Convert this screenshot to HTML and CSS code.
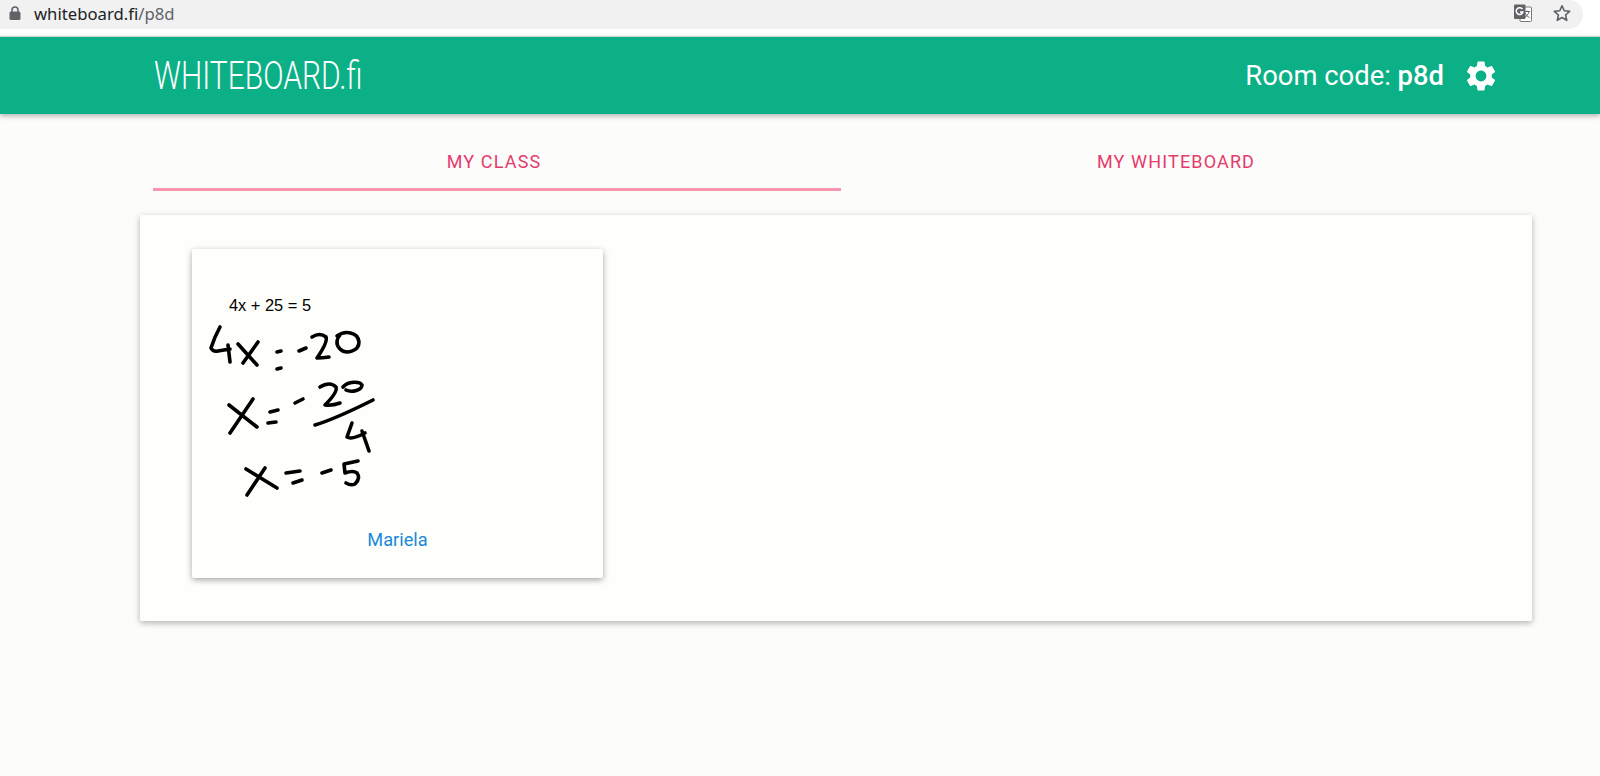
FILE: index.html
```html
<!DOCTYPE html>
<html lang="en">
<head>
    <meta charset="UTF-8">
    <title>Whiteboard.fi</title>
    <link rel="stylesheet" href="styles.css">
</head>
<body>
    <div class="address-row">
        <div class="address-bar">
            <svg class="lock-icon" viewBox="0 0 12 14" width="12" height="14">
                <path d="M3 6V4a3 3 0 0 1 6 0v2" fill="none" stroke="#5f6368" stroke-width="1.6"/>
                <rect x="0.5" y="5.5" width="11" height="8.5" rx="1.5" fill="#5f6368"/>
            </svg>
            <span class="url">whiteboard.fi<span class="url-path">/p8d</span></span>
            <svg class="translate-icon" viewBox="0 0 18 18" width="18" height="18">
                <rect x="6" y="3" width="11.5" height="14.5" rx="1" fill="#fff" stroke="#777" stroke-width="1"/>
                <path d="M10 7.5h6M13 6.5v1M15 7.5c-.6 3-2.6 5-4.6 6M11 9c.8 2 2.6 3.6 4.6 4.5" fill="none" stroke="#666" stroke-width="1"/>
                <rect x="0" y="0.5" width="11.5" height="14.5" rx="1" fill="#5f6368"/>
                <path d="M8.5 5.2a3.4 3.4 0 1 0 .4 2.8H6" fill="none" stroke="#fff" stroke-width="1.5"/>
            </svg>
            <svg class="star-icon" viewBox="0 0 24 24" width="20" height="20">
                <path d="M12 3.3l2.7 6 6.5.7-4.900 4.400 1.400 6.400L12 17.500l-5.700 3.300 1.400-6.400L2.800 10l6.500-.7z" fill="none" stroke="#5f6368" stroke-width="2" stroke-linejoin="round"/>
            </svg>
        </div>
    </div>

    <header class="navbar">
        <div class="logo">WHITEBOARD.fi</div>
        <div class="room-info">
            <span>Room code: <b>p8d</b></span>
            <svg class="gear-icon" viewBox="0 0 24 24" width="36" height="36">
                <path fill="#fff" d="M19.140 12.940c.04-.3.060-.61.060-.94 0-.32-.02-.64-.07-.94l2.030-1.580a.49.49 0 0 0 .12-.61l-1.920-3.320a.49.49 0 0 0-.59-.22l-2.390.96c-.5-.38-1.030-.7-1.620-.94l-.36-2.540a.48.48 0 0 0-.48-.41h-3.840a.47.47 0 0 0-.47.41l-.36 2.540c-.59.24-1.130.57-1.620.94l-2.390-.96a.48.48 0 0 0-.59.22L2.740 8.870a.47.47 0 0 0 .12.61l2.030 1.580c-.05.3-.09.63-.09.94s.02.640.07.94l-2.030 1.580a.49.49 0 0 0-.12.61l1.920 3.320c.12.22.37.29.59.22l2.390-.96c.5.380 1.030.7 1.620.94l.36 2.540c.05.24.24.41.48.41h3.840c.24 0 .44-.17.47-.41l.36-2.540c.59-.24 1.130-.56 1.620-.94l2.390.96c.22.080.47 0 .59-.22l1.920-3.320a.47.47 0 0 0-.12-.61l-2.010-1.580zM12 15.600A3.610 3.610 0 0 1 8.400 12c0-1.980 1.620-3.600 3.600-3.600s3.600 1.620 3.600 3.600-1.620 3.600-3.600 3.600z"/>
            </svg>
        </div>
    </header>

    <nav class="tabs">
        <a class="tab tab-active">MY CLASS</a>
        <a class="tab">MY WHITEBOARD</a>
    </nav>

    <main class="panel">
        <div class="board-card">
            <div class="board-question">4x + 25 = 5</div>
            <!-- the student's pen strokes, in page-ish coordinates -->
            <svg class="board-drawing" viewBox="192 312 411 202" width="411" height="202">
                <g fill="none" stroke="#000" stroke-width="3.6" stroke-linecap="round" stroke-linejoin="round">
                    <path d="M220 327Q214 338 211 348Q213 352 218 351L230 349M228 345L230 362"/>
                    <path d="M238 344L257 365M258 342L243 363"/>
                    <path d="M277 352L281 351M277 369L281 368"/>
                    <path d="M299 351L306 348"/>
                    <path d="M312 337Q320 332 326 337Q328 342 317 358Q322 358 329 357"/>
                    <path d="M337 336C345 330 358 332 359 342C359 351 346 355 340 349C335 344 337 338 340 335"/>
                    <path d="M229 405L257 427M253 399L230 433"/>
                    <path d="M270 412L278 410M268 423L276 422"/>
                    <path d="M295 403L303 399"/>
                    <path d="M320 387Q330 381 336 387Q338 392 325 405Q332 406 340 403"/>
                    <path d="M343 387C348 381 360 381 362 385C362 390 352 393 346 390"/>
                    <path d="M315 425Q335 419 373 400"/>
                    <path d="M352 423L347 437Q352 440 365 433M362 431L369 451"/>
                    <path d="M246 469L277 488M265 468L247 495"/>
                    <path d="M286 473L300 471M293 483L302 480"/>
                    <path d="M322 473L331 470"/>
                    <path d="M358 461L344 464L345 473Q353 470 357 473Q361 478 355 484Q351 486 346 483"/>
                </g>
            </svg>
            <div class="board-name">Mariela</div>
        </div>
    </main>
</body>
</html>
```

FILE: styles.css
```css
:root {
    --green: #0bb086;
    --pink: #e63a6c;
    --paper: #fefffb;
}

body {
    margin: 0;
    min-height: 100vh;
    background-color: #fcfdfa;
    font-family: 'Roboto', sans-serif;
}

.address-row {
    height: 36px;
    background-color: #fff;
}

.address-bar {
    width: 1583px;
    height: 29px;
    display: flex;
    align-items: center;
    background-color: #f1f1f1;
    border-radius: 0 15px 15px 0;
    box-sizing: border-box;
    padding: 0 0 3px 9px;
}

.lock-icon {
    flex: none;
}

.url {
    margin-left: 13px;
    font-family: 'Noto Sans', sans-serif;
    font-size: 16.7px;
    color: #202124;
}

.url-path {
    color: #5f6368;
}

.translate-icon {
    margin-left: auto;
}

.star-icon {
    margin: 0 11px 0 20px;
}

.navbar {
    height: 78px;
    box-sizing: border-box;
    padding: 0 101px 0 154px;
    display: flex;
    justify-content: space-between;
    align-items: center;
    background-color: var(--green);
    border-top: 1px solid #c9d6d0;
    color: #fff;
    box-shadow: 0 2px 5px rgba(0,0,0,0.3);
}

.logo {
    font-size: 38px;
    font-weight: 300;
    transform: scaleX(0.79);
    transform-origin: left center;
}

.room-info {
    display: flex;
    align-items: center;
    gap: 19px;
    font-size: 27.4px;
}

.room-info b {
    font-weight: 500;
}

.tabs {
    display: flex;
    margin: 0 89px 0 153px;
}

.tab {
    flex: 1;
    height: 77px;
    box-sizing: border-box;
    padding-top: 37px;
    text-align: center;
    font-size: 18px;
    letter-spacing: 1.15px;
    color: var(--pink);
}

.tab-active {
    flex: none;
    width: 688px;
    padding-right: 6px;
    border-bottom: 3px solid #f796ad;
}

.panel {
    margin: 24px 68px 0 140px;
    height: 406px;
    box-sizing: border-box;
    padding: 34px 52px;
    background-color: var(--paper);
    border-radius: 2px;
    box-shadow: 0 2px 6px rgba(0,0,0,0.3);
}

.board-card {
    width: 411px;
    height: 329px;
    box-sizing: border-box;
    padding-top: 47px;
    background-color: var(--paper);
    border-radius: 2px;
    box-shadow: 0 2px 6px rgba(0,0,0,0.35);
}

.board-question {
    margin-left: 37px;
    height: 16px;
    line-height: 18px;
    font-family: 'Liberation Sans', sans-serif;
    font-size: 16.4px;
    color: #000;
}

.board-drawing {
    display: block;
}

.board-name {
    margin-top: 15px;
    text-align: center;
    font-size: 18.2px;
    color: #1a88d8;
}
```
